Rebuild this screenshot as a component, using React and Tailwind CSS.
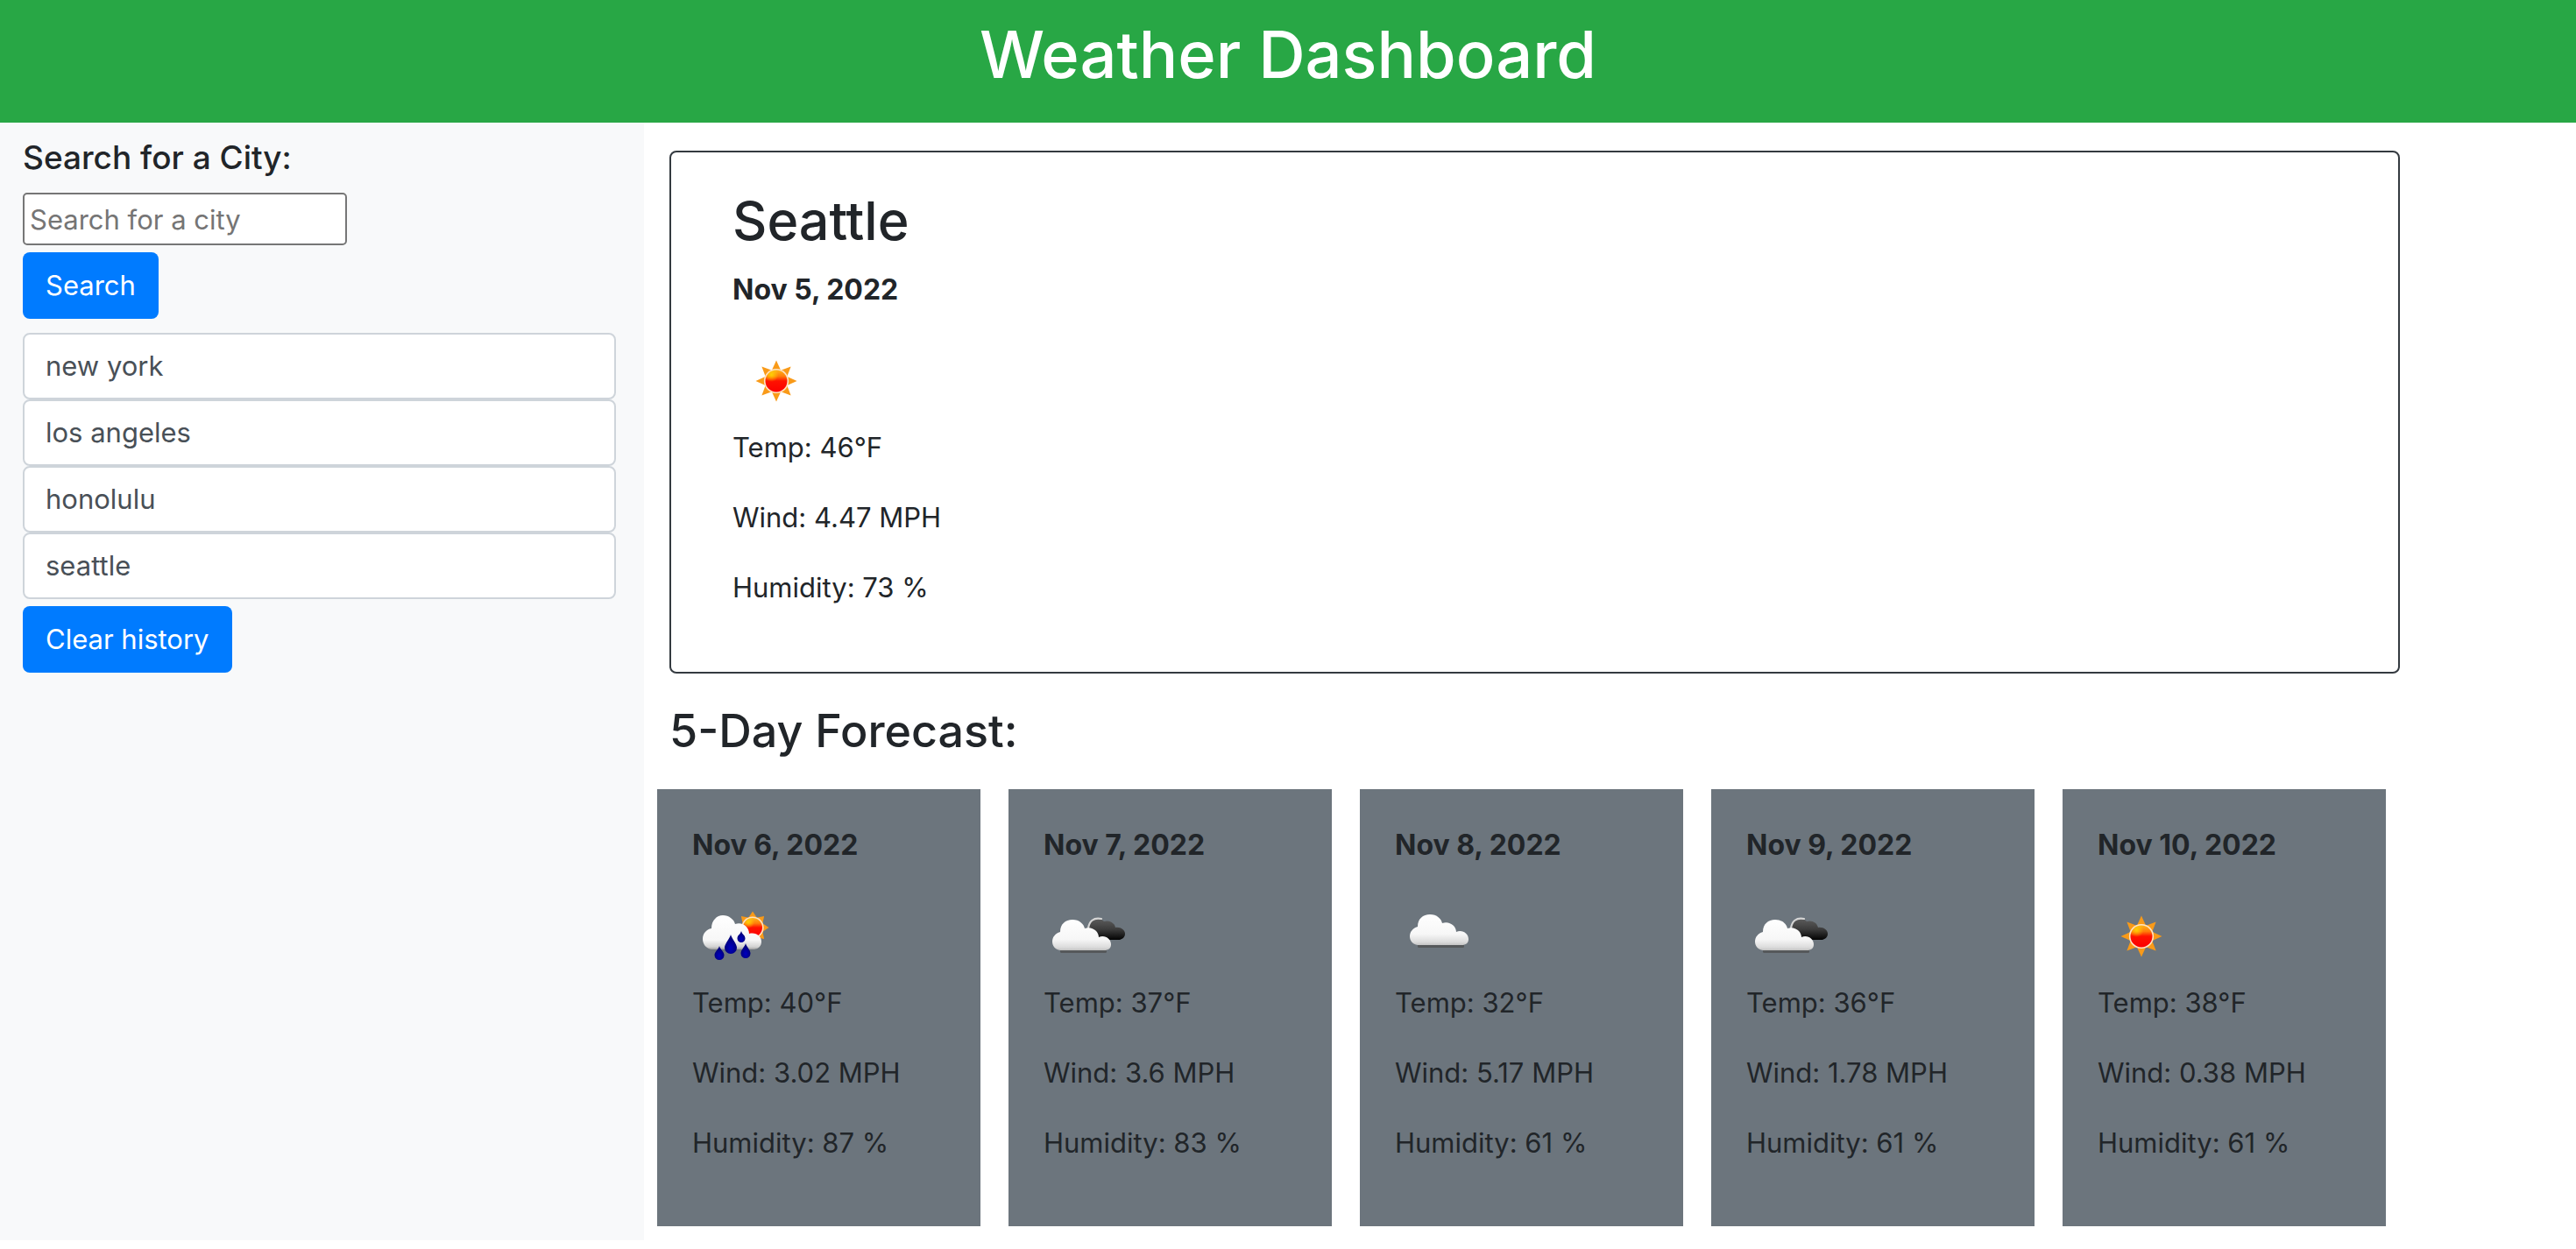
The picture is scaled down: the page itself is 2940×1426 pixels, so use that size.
import React, { useId, useState } from 'react';

const RAYS = [0, 45, 90, 135, 180, 225, 270, 315];

function Sun({ cx, cy, r, reach, id }) {
  return (
    <g>
      <defs>
        <linearGradient id={`${id}-core`} x1="0" y1="0" x2="0" y2="1">
          <stop offset="0" stopColor="#ffb41a" />
          <stop offset="0.28" stopColor="#ff7d0a" />
          <stop offset="0.5" stopColor="#ff1200" />
          <stop offset="1" stopColor="#fb0000" />
        </linearGradient>
        <radialGradient id={`${id}-gloss`} cx="0.28" cy="0.22" r="0.32">
          <stop offset="0" stopColor="#ffe600" stopOpacity="0.75" />
          <stop offset="1" stopColor="#ffe600" stopOpacity="0" />
        </radialGradient>
      </defs>
      {RAYS.map((angle) => (
        <polygon
          key={angle}
          points={`${cx},${cy - reach} ${cx - 5},${cy - r} ${cx + 5},${cy - r}`}
          fill="#f99a18"
          transform={`rotate(${angle} ${cx} ${cy})`}
        />
      ))}
      <circle cx={cx} cy={cy} r={r + 1.6} fill="#ffe3c4" />
      <circle cx={cx} cy={cy} r={r} fill={`url(#${id}-core)`} />
      <circle cx={cx} cy={cy} r={r} fill={`url(#${id}-gloss)`} />
    </g>
  );
}

function WhiteCloud({ x = 0, y = 0, id }) {
  return (
    <g transform={`translate(${x} ${y})`}>
      <defs>
        <linearGradient id={`${id}-cloud`} gradientUnits="userSpaceOnUse" x1="0" y1="28" x2="0" y2="64">
          <stop offset="0" stopColor="#ffffff" />
          <stop offset="0.65" stopColor="#f7f7f7" />
          <stop offset="0.9" stopColor="#dcdcdc" />
          <stop offset="1" stopColor="#c4c4c4" />
        </linearGradient>
      </defs>
      <rect x="19" y="62" width="53" height="5" rx="1.5" fill="#4d4d4d" opacity="0.7" />
      <path
        d="M19 64 C13 63 10 59 10 54 C10 49 13 45 19 43 C19 34 25 29 33 29 C41 29 46 34 47 39 C55 36 63 42 63 49 C70 46 77 51 77 57 C77 61 75 63 71 64 Z"
        fill={`url(#${id}-cloud)`}
      />
    </g>
  );
}

function DarkCloud({ id }) {
  return (
    <g>
      <defs>
        <linearGradient id={`${id}-dark`} x1="0" y1="0" x2="0" y2="1">
          <stop offset="0" stopColor="#5c5c5c" />
          <stop offset="0.5" stopColor="#3c3c3c" />
          <stop offset="1" stopColor="#030303" />
        </linearGradient>
      </defs>
      <path
        d="M51 42 C51 33 56 28 62 28 C65 28 67 29 69 31 C74 29 81 32 82 38 C88 37 93 41 93 45 C93 49 90 51 87 52 L62 52 Z"
        fill={`url(#${id}-dark)`}
      />
      <path d="M51 39 C52 31 57 26 66 28" fill="none" stroke="#d5d5d5" strokeWidth="2.2" strokeLinecap="round" />
    </g>
  );
}

function Drop({ x, top, bottom, w, id }) {
  const r = w / 2;
  const c = bottom - r;
  return (
    <path
      d={`M${x} ${top} C${x + 1} ${top + 4} ${x + r} ${c - 4} ${x + r} ${c} A${r} ${r} 0 0 1 ${x - r} ${c} C${x - r} ${c - 4} ${x - 1} ${top + 4} ${x} ${top} Z`}
      fill={`url(#${id}-drop)`}
    />
  );
}

function RainCloud({ id }) {
  return (
    <g>
      <defs>
        <linearGradient id={`${id}-rain`} gradientUnits="userSpaceOnUse" x1="0" y1="25" x2="0" y2="64">
          <stop offset="0" stopColor="#ffffff" />
          <stop offset="0.7" stopColor="#f7f7f7" />
          <stop offset="0.9" stopColor="#d2d2d2" />
          <stop offset="1" stopColor="#8a8a8a" />
        </linearGradient>
        <radialGradient id={`${id}-drop`} cx="0.5" cy="0.7" r="0.5">
          <stop offset="0" stopColor="#0000c0" />
          <stop offset="1" stopColor="#00007c" />
        </radialGradient>
      </defs>
      <path
        d="M22 63 C16 62 12 57 12 51 C12 45 16 40 22 39 C22 30 28 24 35 24 C42 24 48 29 49 34 C57 31 65 37 65 45 C73 43 79 48 79 54 C79 59 76 62 71 63 Z"
        fill={`url(#${id}-rain)`}
      />
      <Drop x={31} top={59} bottom={75} w={11} id={id} />
      <Drop x={44} top={46} bottom={68} w={14} id={id} />
      <Drop x={56} top={42} bottom={55} w={9} id={id} />
      <Drop x={61} top={56} bottom={73} w={11} id={id} />
    </g>
  );
}

function WeatherIcon({ kind }) {
  const id = useId();
  return (
    <svg viewBox="0 0 100 100" className="block size-[100px]" role="img" aria-label={kind}>
      {kind === 'clear' && <Sun cx={50} cy={48} r={12.5} reach={23.5} id={id} />}
      {kind === 'rain' && (
        <>
          <Sun cx={69} cy={38} r={11} reach={18.5} id={id} />
          <RainCloud id={id} />
        </>
      )}
      {kind === 'overcast' && (
        <>
          <DarkCloud id={id} />
          <WhiteCloud id={id} />
        </>
      )}
      {kind === 'cloudy' && <WhiteCloud x={7} y={-6} id={id} />}
    </svg>
  );
}

function Conditions({ day }) {
  return (
    <>
      <p className="mb-8 text-[32px] leading-[48px] font-bold">{day.date}</p>
      <WeatherIcon kind={day.icon} />
      <p className="mb-8">Temp: {day.temp}°F</p>
      <p className="mb-8">Wind: {day.wind} MPH</p>
      <p className="mb-8">Humidity: {day.humidity} %</p>
    </>
  );
}

const TODAY = { date: 'Nov 5, 2022', icon: 'clear', temp: 46, wind: 4.47, humidity: 73 };

const FORECAST = [
  { date: 'Nov 6, 2022', icon: 'rain', temp: 40, wind: 3.02, humidity: 87 },
  { date: 'Nov 7, 2022', icon: 'overcast', temp: 37, wind: 3.6, humidity: 83 },
  { date: 'Nov 8, 2022', icon: 'cloudy', temp: 32, wind: 5.17, humidity: 61 },
  { date: 'Nov 9, 2022', icon: 'overcast', temp: 36, wind: 1.78, humidity: 61 },
  { date: 'Nov 10, 2022', icon: 'clear', temp: 38, wind: 0.38, humidity: 61 },
];

const BUTTON = 'h-[76px] rounded-lg bg-[#007bff] px-[26px] text-white';

export default function App() {
  const [history, setHistory] = useState(['new york', 'los angeles', 'honolulu', 'seattle']);
  const [query, setQuery] = useState('');

  return (
    <div className="bg-white font-[Inter,sans-serif] text-[31px] leading-[48px] text-[#212529]">
      <header className="bg-[#28a745] pt-[14px] pb-[30px]">
        <h1 className="text-center text-[74px] leading-[96px] font-medium text-white">Weather Dashboard</h1>
      </header>
      <div className="flex">
        <aside className="w-1/4 bg-[#f8f9fa] pt-4 pr-8 pb-4 pl-[26px]">
          <form className="flex flex-col items-start" onSubmit={(e) => e.preventDefault()}>
            <label htmlFor="city" className="mb-4 text-[37px] leading-[48px] font-medium">
              Search for a City:
            </label>
            <input
              id="city"
              type="text"
              value={query}
              onChange={(e) => setQuery(e.target.value)}
              placeholder="Search for a city"
              className="mb-2 h-[60px] w-[370px] max-w-full rounded-[5px] border-2 border-[#767676] bg-white px-1.5 placeholder:text-[#757575]"
            />
            <button type="submit" className={BUTTON}>
              Search
            </button>
          </form>
          <div className="mt-4 mb-2 flex flex-col">
            {history.map((city) => (
              <button
                key={city}
                type="button"
                onClick={() => setQuery(city)}
                className="h-[76px] rounded-lg border-2 border-[#ced4da] bg-white px-6 text-left text-[#495057]"
              >
                {city}
              </button>
            ))}
          </div>
          <button type="button" className={BUTTON} onClick={() => setHistory([])}>
            Clear history
          </button>
        </aside>
        <main className="flex-1 pt-8 pr-[201px] pb-4 pl-[29px]">
          <section className="rounded-lg border-2 border-[#343a40] px-[70px] py-10">
            <h2 className="mb-4 text-[61px] leading-[77px] font-medium">Seattle</h2>
            <Conditions day={TODAY} />
          </section>
          <h2 className="mt-8 mb-8 text-[52px] leading-[68px] font-medium">5-Day Forecast:</h2>
          <section className="mr-4 -ml-[14px] grid grid-cols-5 gap-8">
            {FORECAST.map((day) => (
              <article key={day.date} className="bg-[#6c757d] px-10 pt-10 pb-[39px]">
                <Conditions day={day} />
              </article>
            ))}
          </section>
        </main>
      </div>
    </div>
  );
}
